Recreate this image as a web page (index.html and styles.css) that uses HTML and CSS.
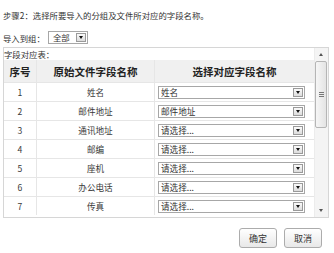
FILE: index.html
```html
<!DOCTYPE html>
<html lang="zh-CN">
<head>
  <meta charset="UTF-8" />
  <title>导入联系人 - 步骤2</title>
  <link rel="stylesheet" href="styles.css">
</head>
<body>
  <div class="wizard">
    <p class="step">步骤2：选择所要导入的分组及文件所对应的字段名称。</p>

    <div class="group-row">
      <span class="group-label">导入到组：</span>
      <span class="combo combo-small"><span class="combo-text">全部</span><i class="combo-btn"></i></span>
    </div>

    <div class="map-box">
      <div class="map-body">
        <div class="caption">字段对应表：</div>
        <table class="map-table">
          <thead>
            <tr><th class="col-no">序号</th><th class="col-src">原始文件字段名称</th><th class="col-dst">选择对应字段名称</th></tr>
          </thead>
          <tbody>
            <tr><td>1</td><td>姓名</td><td><span class="combo"><span class="combo-text">姓名</span><i class="combo-btn"></i></span></td></tr>
            <tr><td>2</td><td>邮件地址</td><td><span class="combo"><span class="combo-text">邮件地址</span><i class="combo-btn"></i></span></td></tr>
            <tr><td>3</td><td>通讯地址</td><td><span class="combo"><span class="combo-text">请选择...</span><i class="combo-btn"></i></span></td></tr>
            <tr><td>4</td><td>邮编</td><td><span class="combo"><span class="combo-text">请选择...</span><i class="combo-btn"></i></span></td></tr>
            <tr><td>5</td><td>座机</td><td><span class="combo"><span class="combo-text">请选择...</span><i class="combo-btn"></i></span></td></tr>
            <tr><td>6</td><td>办公电话</td><td><span class="combo"><span class="combo-text">请选择...</span><i class="combo-btn"></i></span></td></tr>
            <tr><td>7</td><td>传真</td><td><span class="combo"><span class="combo-text">请选择...</span><i class="combo-btn"></i></span></td></tr>
          </tbody>
        </table>
      </div>
      <!-- barra de desplazamiento -->
      <div class="vscroll">
        <span class="vscroll-arrow up"></span>
        <div class="vscroll-track">
          <div class="vscroll-thumb"><span class="grip"></span></div>
        </div>
        <span class="vscroll-arrow down"></span>
      </div>
    </div>

    <div class="actions">
      <button type="button" class="btn">确定</button>
      <button type="button" class="btn">取消</button>
    </div>
  </div>
</body>
</html>
```

FILE: styles.css
```css
body {
  margin: 0;
  font-family: "Noto Sans CJK SC", "Liberation Sans", sans-serif;
  font-size: 8.4px;
  color: #333;
  background: #fff;
}

.wizard {
  width: 334px;
  height: 253px;
  overflow: hidden;
}

.step {
  margin: 0;
  padding: 9px 0 0 3px;
  height: 13px;
  line-height: 13px;
}

.group-row {
  display: flex;
  align-items: center;
  padding: 9px 0 0 3px;
  height: 13px;
}

.group-label {
  width: 45px;
}

/* combo (select simulado) */
.combo {
  display: flex;
  align-items: center;
  box-sizing: border-box;
  height: 13px;
  border: 1px solid #a7a7a7;
  background: #fff;
  font-size: 8.6px;
  color: #333;
  text-align: left;
}
.combo-text {
  flex: 1;
  padding-left: 2px;
  line-height: 11px;
  white-space: nowrap;
  overflow: hidden;
}
.combo-btn {
  position: relative;
  box-sizing: border-box;
  width: 10px;
  height: 9px;
  margin-right: 1px;
  border: 1px solid #9a9a9a;
  background: linear-gradient(#fafafa, #dcdcdc);
}
.combo-btn::after {
  content: "";
  position: absolute;
  left: 2px;
  top: 2px;
  border-left: 2px solid transparent;
  border-right: 2px solid transparent;
  border-top: 3px solid #111;
}
.combo-small {
  width: 40px;
  font-size: 8.4px;
}
.combo-small .combo-text {
  padding-left: 4px;
}

.map-box {
  display: flex;
  box-sizing: border-box;
  width: 326px;
  height: 171px;
  margin: 3px 0 0 3px;
  border: 1px solid #d6d6d6;
}

.map-body {
  flex: 1;
}

.caption {
  height: 12px;
  line-height: 12px;
}

.map-table {
  width: 100%;
  border-collapse: collapse;
  table-layout: fixed;
}
.map-table th {
  height: 22px;
  padding: 0;
  background: #f0f0f0;
  color: #222;
  font-size: 10.5px;
  font-weight: 700;
  text-align: center;
  border-right: 1px solid #e6e6e6;
}
.map-table td {
  height: 18px;
  padding: 0;
  text-align: center;
  font-size: 8.6px;
  color: #3a3a3a;
  border-top: 1px solid #e6e6e6;
  border-right: 1px solid #e6e6e6;
}
.map-table td:last-child,
.map-table th:last-child {
  border-right: none;
}
.map-table td:last-child {
  padding: 0 9px 0 3px;
}
.col-no { width: 32px; }
.col-src { width: 117px; }

/* scrollbar simulada */
.vscroll {
  display: flex;
  flex-direction: column;
  align-items: center;
  width: 13px;
  background: #f4f4f4;
  border-left: 1px solid #ececec;
}
.vscroll-arrow {
  height: 11px;
  width: 13px;
  position: relative;
}
.vscroll-arrow::after {
  content: "";
  position: absolute;
  left: 4px;
  border-left: 2px solid transparent;
  border-right: 2px solid transparent;
}
.vscroll-arrow.up::after {
  top: 5px;
  border-bottom: 3px solid #555;
}
.vscroll-arrow.down::after {
  top: 3px;
  border-top: 3px solid #555;
}
.vscroll-track {
  flex: 1;
  width: 13px;
}
.vscroll-thumb {
  display: flex;
  align-items: center;
  justify-content: center;
  box-sizing: border-box;
  width: 12px;
  height: 67px;
  margin: 2px 0 0 0;
  border: 1px solid #b5b5b5;
  border-radius: 2px;
  background: linear-gradient(90deg, #f6f6f6, #e4e4e4);
}
.grip {
  width: 5px;
  height: 5px;
  background: repeating-linear-gradient(#777 0 1px, transparent 1px 2px);
}

.actions {
  display: flex;
  justify-content: flex-end;
  gap: 7px;
  padding: 10px 12px 0 0;
}
.btn {
  width: 38px;
  height: 20px;
  padding: 0;
  border: 1px solid #acacac;
  border-radius: 3px;
  background: linear-gradient(#ffffff, #e8e8e8);
  font-family: "Noto Sans CJK SC", sans-serif;
  font-size: 9px;
  color: #333;
}
```
